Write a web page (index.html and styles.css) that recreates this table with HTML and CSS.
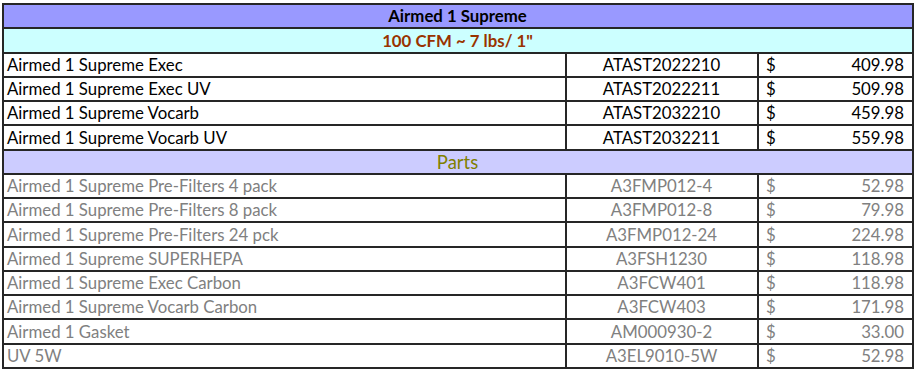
FILE: index.html
```html
<!DOCTYPE html>
<html>
<head>
<meta charset="utf-8">
<link rel="stylesheet" href="styles.css">
</head>
<body>
<table class="sheet">
  <colgroup>
    <col class="c-name">
    <col class="c-code">
    <col class="c-price">
  </colgroup>
  <tr class="title"><td colspan="3">Airmed 1 Supreme</td></tr>
  <tr class="sub"><td colspan="3">100 CFM ~ 7 lbs/ 1"</td></tr>
  <tr><td class="name">Airmed 1 Supreme Exec</td><td class="code">ATAST2022210</td><td class="price"><span class="cur">$</span><span class="amt">409.98</span></td></tr>
  <tr><td class="name">Airmed 1 Supreme Exec UV</td><td class="code">ATAST2022211</td><td class="price"><span class="cur">$</span><span class="amt">509.98</span></td></tr>
  <tr><td class="name">Airmed 1 Supreme Vocarb</td><td class="code">ATAST2032210</td><td class="price"><span class="cur">$</span><span class="amt">459.98</span></td></tr>
  <tr><td class="name">Airmed 1 Supreme Vocarb UV</td><td class="code">ATAST2032211</td><td class="price"><span class="cur">$</span><span class="amt">559.98</span></td></tr>
  <tr class="parts"><td colspan="3">Parts</td></tr>
  <tr class="part"><td class="name">Airmed 1 Supreme Pre-Filters 4 pack</td><td class="code">A3FMP012-4</td><td class="price"><span class="cur">$</span><span class="amt">52.98</span></td></tr>
  <tr class="part"><td class="name">Airmed 1 Supreme Pre-Filters 8 pack</td><td class="code">A3FMP012-8</td><td class="price"><span class="cur">$</span><span class="amt">79.98</span></td></tr>
  <tr class="part"><td class="name">Airmed 1 Supreme Pre-Filters 24 pck</td><td class="code">A3FMP012-24</td><td class="price"><span class="cur">$</span><span class="amt">224.98</span></td></tr>
  <tr class="part"><td class="name">Airmed 1 Supreme SUPERHEPA</td><td class="code">A3FSH1230</td><td class="price"><span class="cur">$</span><span class="amt">118.98</span></td></tr>
  <tr class="part"><td class="name">Airmed 1 Supreme Exec Carbon</td><td class="code">A3FCW401</td><td class="price"><span class="cur">$</span><span class="amt">118.98</span></td></tr>
  <tr class="part"><td class="name">Airmed 1 Supreme Vocarb Carbon</td><td class="code">A3FCW403</td><td class="price"><span class="cur">$</span><span class="amt">171.98</span></td></tr>
  <tr class="part"><td class="name">Airmed 1 Gasket</td><td class="code">AM000930-2</td><td class="price"><span class="cur">$</span><span class="amt">33.00</span></td></tr>
  <tr class="part"><td class="name">UV 5W</td><td class="code">A3EL9010-5W</td><td class="price"><span class="cur">$</span><span class="amt">52.98</span></td></tr>
</table>
</body>
</html>
```
FILE: styles.css
```css
html, body {
  margin: 0;
  padding: 0;
  background: #ffffff;
}
body {
  padding: 3px 0 0 2px;
  font-family: Lato, "Open Sans", sans-serif;
  font-size: 16.8px;
  color: #000;
}
.sheet {
  border-collapse: collapse;
  table-layout: fixed;
  width: 910px;
}
.c-name { width: 563px; }
.c-code { width: 192px; }
.c-price { width: 155px; }
.sheet td {
  border: 2px solid #262626;
  height: 22.25px;
  padding: 0 4px 0 3px;
  line-height: 22px;
  vertical-align: bottom;
  white-space: nowrap;
  overflow: hidden;
}
.sheet tr.title td {
  background: #9999ff;
  text-align: center;
  font-weight: bold;
}
.sheet tr.sub td {
  background: #ccffff;
  color: #993300;
  text-align: center;
  font-weight: bold;
}
.sheet tr.parts td {
  background: #ccccff;
  color: #808000;
  text-align: center;
  font-size: 18.5px;
}
.sheet td.code {
  text-align: center;
}
.sheet td.price {
  padding: 0 8px 0 7px;
}
.amt {
  float: right;
}
.sheet tr.part td {
  color: #808080;
}
```
